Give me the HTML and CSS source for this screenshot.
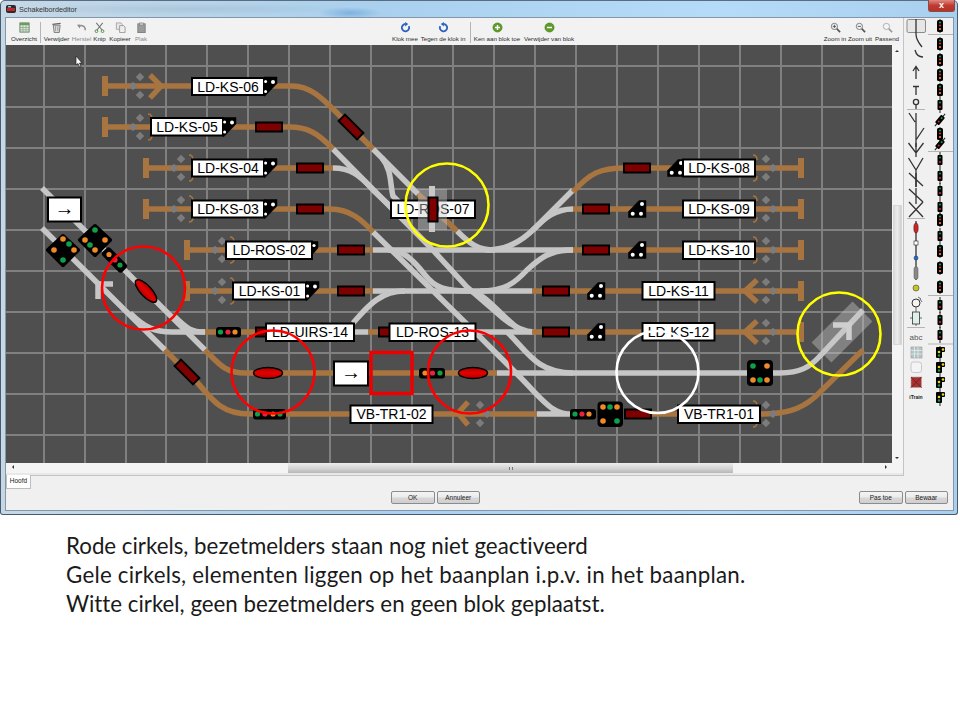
FILE: index.html
```html
<!DOCTYPE html>
<html lang="nl">
<head>
<meta charset="utf-8">
<title>Schakelbordeditor</title>
<link rel="stylesheet" href="styles.css">
</head>
<body>
<svg class="defs" width="0" height="0" aria-hidden="true">
  <defs>
    <linearGradient id="redfill" x1="0" y1="0" x2="0" y2="1"><stop offset="0" stop-color="#a80000"/><stop offset=".5" stop-color="#e60000"/><stop offset="1" stop-color="#b00000"/></linearGradient>
    <g id="dmL"><rect class="dm" x="4" y="-12" width="6" height="6" transform="rotate(45 7 -9)"/><rect class="dm" x="-3" y="-3" width="6" height="6" transform="rotate(45 0 0)"/><rect class="dm" x="4" y="6" width="6" height="6" transform="rotate(45 7 9)"/></g>
    <g id="dmR"><rect class="dm" x="-10" y="-12" width="6" height="6" transform="rotate(45 -7 -9)"/><rect class="dm" x="-3" y="-3" width="6" height="6" transform="rotate(45 0 0)"/><rect class="dm" x="-10" y="6" width="6" height="6" transform="rotate(45 -7 9)"/></g>
    <g id="par"><path class="paren" d="M-2 -13 Q2 -13 2 -8"/><path class="paren" d="M-2 13 Q2 13 2 8"/></g>
    <g id="bump"><rect class="bump" x="-3" y="-10" width="6" height="20"/></g>
    <g id="block"><rect class="blk" x="-13" y="-4.5" width="26" height="9"/></g>
    <g id="tl"><path class="sigb" d="M0 -9.5H13V-3L1 9.5H0Z"/><circle class="wd" cx="9" cy="-4.5" r="2"/><circle class="wd" cx="1.6" cy="-5" r="1.5"/><circle class="wd" cx="1.6" cy="5" r="1.5"/></g>
    <g id="tr"><path class="sigb" d="M-9.5 8.5H8V-8.5H1L-9.5 2.5Z"/><circle class="wd" cx="-5.3" cy="4.7" r="2"/><circle class="wd" cx="3" cy="4.7" r="2"/><circle class="wd" cx="4" cy="-5" r="2"/></g>
    <g id="ov"><ellipse class="ovl" cx="0" cy="0" rx="14.5" ry="5.5"/></g>
    <g id="ps1"><path class="pline" d="M0 -7V7"/><rect class="pbk" x="-3" y="-6" width="6" height="12" rx="1.5"/><circle class="lg" cy="-3.5" r="1.1"/><circle class="lr" cy="-.5" r="1.1"/><circle class="lo" cy="3" r="1.1"/></g>
    <g id="ps2"><path class="pline" d="M0 -8V8"/><rect class="pbk" x="-2.5" y="-5" width="5" height="10" rx="1"/><circle class="lg" cy="-2.5" r="1"/><circle class="lr" cy="2" r="1"/></g>
    <g id="ps3"><path class="pline" d="M0 -7V8"/><rect class="pbk" x="-4" y="-6" width="6" height="11" rx="1"/><rect class="pbk" x="1" y="-6" width="4" height="5" rx="1"/><circle class="ly" cx="3" cy="-3.500" r="1.300"/><circle class="ly" cy="-1" cx="-1" r="1.300"/><circle class="lg" cy="2.500" cx="-1" r="1.200"/></g>
  </defs>
</svg>

<div class="window">
  <div class="titlebar">
    <svg class="appicon" viewBox="0 0 10 10"><rect x="0" y="1" width="10" height="8" rx="2" fill="#2b2b2b"/><rect x="1" y="4" width="8" height="3" fill="#c2242a"/><rect x="2" y="2" width="3" height="1.5" fill="#9fc5e0"/></svg>
    <span class="title">Schakelbordeditor</span>
    <span class="close">x</span>
  </div>
  <div class="client">
    <div class="upper">
      <div class="pane">
        <div class="toolbar">
          <div class="group group-left">
            <div class="tool t-over"><svg viewBox="0 0 12 12"><rect x="1" y="1" width="10" height="10" fill="#dfe9dc" stroke="#5d7f5b"/><rect x="1" y="1" width="10" height="2.5" fill="#6d9a63"/><path d="M4.3 3.5V11M7.6 3.5V11M1 6H11M1 8.5H11" stroke="#7f9d7c" stroke-width=".7"/></svg><span>Overzicht</span></div>
            <i class="sep"></i>
            <div class="tool t-verw"><svg viewBox="0 0 12 12"><path d="M2.5 3.5L3.5 11.5H9L10 3.5Z" fill="#dcdcdc" stroke="#777"/><path d="M1.5 2.5L10.5 1.5" stroke="#666" stroke-width="1.4"/><path d="M5 4.5V10M7.5 4.5V10" stroke="#888" stroke-width=".8"/></svg><span>Verwijder</span></div>
            <div class="tool t-herst muted"><svg viewBox="0 0 12 12"><path d="M3 5.5C5 3 9 3.5 10 7V9" fill="none" stroke="#8d8d8d" stroke-width="1.6"/><path d="M1 3L4.8 2.6L4.3 7Z" fill="#8d8d8d"/></svg><span>Herstel</span></div>
            <div class="tool t-knip"><svg viewBox="0 0 12 12"><path d="M2.5 1L9 9M9.5 1L3 9" stroke="#707070" stroke-width="1.1"/><circle cx="2.7" cy="10" r="1.5" fill="none" stroke="#4f8a3f"/><circle cx="9.3" cy="10" r="1.5" fill="none" stroke="#4f8a3f"/></svg><span>Knip</span></div>
            <div class="tool t-kop"><svg viewBox="0 0 12 12"><path d="M1.5 1H6.5L8 2.5V8H1.5Z" fill="#e6e6e6" stroke="#a5a5a5"/><path d="M5 4H9.5L11 5.5V11.5H5Z" fill="#eee" stroke="#9a9a9a"/></svg><span>Kopieer</span></div>
            <div class="tool t-plak muted"><svg viewBox="0 0 12 12"><rect x="2" y="2" width="8" height="9.5" fill="#9b9b9b" stroke="#7e7e7e"/><rect x="4" y="1" width="4" height="2.5" fill="#c5c5c5" stroke="#7e7e7e" stroke-width=".6"/></svg><span>Plak</span></div>
          </div>
          <div class="group group-mid">
            <div class="tool t-klok"><svg viewBox="0 0 12 12"><path d="M9.6 4.5A4 4 0 1 1 6 2.2" fill="none" stroke="#2d62c0" stroke-width="2"/><path d="M5.6 0L9 2.3L5.6 4.8Z" fill="#2d62c0"/></svg><span>Klok mee</span></div>
            <div class="tool t-tegen"><svg viewBox="0 0 12 12"><path d="M2.4 4.5A4 4 0 1 0 6 2.2" fill="none" stroke="#2d62c0" stroke-width="2"/><path d="M6.4 0L3 2.3L6.4 4.8Z" fill="#2d62c0"/></svg><span>Tegen de klok in</span></div>
            <i class="sep"></i>
            <div class="tool t-ken"><svg viewBox="0 0 12 12"><circle cx="6" cy="6" r="5" fill="#5d9a26" stroke="#3f7a18" stroke-width=".6"/><path d="M3.2 6H8.8M6 3.2V8.8" stroke="#fff" stroke-width="1.6"/></svg><span>Ken aan blok toe</span></div>
            <div class="tool t-van"><svg viewBox="0 0 12 12"><circle cx="6" cy="6" r="5" fill="#5d9a26" stroke="#3f7a18" stroke-width=".6"/><path d="M3.2 6H8.8" stroke="#fff" stroke-width="1.6"/></svg><span>Verwijder van blok</span></div>
          </div>
          <div class="group group-right">
            <div class="tool t-zin"><svg viewBox="0 0 12 12"><path d="M7 7L11 11" stroke="#555" stroke-width="1.8"/><circle cx="4.8" cy="4.8" r="3.4" fill="#eef3f5" stroke="#777"/><path d="M3 4.8H6.6M4.8 3V6.6" stroke="#444" stroke-width=".9"/></svg><span>Zoom in</span></div>
            <div class="tool t-zuit"><svg viewBox="0 0 12 12"><path d="M7 7L11 11" stroke="#555" stroke-width="1.8"/><circle cx="4.8" cy="4.8" r="3.4" fill="#eef3f5" stroke="#777"/><path d="M3 4.8H6.6" stroke="#444" stroke-width=".9"/></svg><span>Zoom uit</span></div>
            <div class="tool t-pas"><svg viewBox="0 0 12 12"><path d="M7 7L11 11" stroke="#9a9a9a" stroke-width="1.8"/><circle cx="4.8" cy="4.8" r="3.4" fill="#f2f4f5" stroke="#aaa"/></svg><span>Passend</span></div>
          </div>
        </div>

        <div class="canvas-row">
          <svg class="board" viewBox="6 45 886 418" width="886" height="418">
            <rect x="6" y="45" width="886" height="418" class="bg"/>
            <path class="grid" d="M44 45V463M85 45V463M126 45V463M166 45V463M207 45V463M248 45V463M289 45V463M330 45V463M371 45V463M412 45V463M453 45V463M494 45V463M535 45V463M576 45V463M617 45V463M658 45V463M699 45V463M740 45V463M781 45V463M822 45V463M863 45V463M6 66H892M6 107H892M6 148H892M6 189H892M6 230H892M6 271H892M6 312H892M6 353H892M6 394H892M6 435H892"/>

            <!-- grey rails -->
            <g class="rail grey">
              <path d="M42 188L205 350"/>
              <path d="M42 228L165 350"/>
              <path d="M113 284H98V299"/>
              <path d="M130 313C145 328 155 332 172 332H205"/>
              <path d="M173 315C188 330 192 332 205 332"/>
              <path d="M373 149L418 194M457 231C470 244 478 250 495 250"/>
              <path d="M382 158C392 170 390 185 393 196L405 208"/>
              <path d="M333 149L430 247L467 287L497 313C510 325 522 332 534 332"/>
              <path d="M333 168C350 168 360 175 373 190L392 208"/>
              <path d="M373 232L483 340L520 377C535 392 545 405 555 410C560 413 565 414 572 414H537"/>
              <path d="M373 250H573"/>
              <path d="M373 291H532"/>
              <path d="M388 250C402 250 412 258 425 275C435 288 445 291 470 291C485 293 500 315 520 330"/>
              <path d="M573 190L535 228C520 243 505 250 485 250"/>
              <path d="M573 209C555 209 545 218 533 230"/>
              <path d="M573 250C550 250 540 258 527 270C515 283 505 291 480 291"/>
              <path d="M353 323C365 310 378 291 405 291"/>
              <path d="M355 332H368"/>
              <path d="M470 332H532"/>
              <path d="M507 332C525 348 535 373 573 373"/>
              <path d="M497 373H750"/>
              <path d="M770 373H780C800 373 810 367 820 356L863 310"/>
            </g>

            <!-- brown rails -->
            <g class="rail brown">
              <path d="M105 86H292C310 86 322 98 336 112L373 149"/>
              <path d="M105 127H290C305 127 316 131 333 149"/>
              <path d="M146 168H333"/>
              <path d="M146 209H330C350 209 362 220 373 232"/>
              <path d="M187 250H373"/>
              <path d="M187 291H373"/>
              <path d="M205 332H265"/>
              <path d="M368 332H390"/>
              <path d="M205 350C218 363 225 373 245 373H497"/>
              <path d="M165 350L197 382C212 400 222 414 250 414H537"/>
              <path d="M573 192C590 173 600 168 625 168H801"/>
              <path d="M573 209H801"/>
              <path d="M573 250H801"/>
              <path d="M532 291H801"/>
              <path d="M532 332H801"/>
              <path d="M650 414H760C785 414 800 410 815 397L863 350"/>
              <path d="M418 194L457 231"/>
              <path d="M150 75L161 86L150 98"/>
              <path d="M468 402L458 413L468 425"/>
              <path d="M757 280L745 291L757 302"/>
              <path d="M757 321L745 332L757 343"/>
            </g>

            <!-- bumpers, parens, diamonds -->
            <use href="#bump" x="105" y="86"/><use href="#bump" x="105" y="127"/>
            <use href="#bump" x="146" y="168"/><use href="#bump" x="146" y="209"/>
            <use href="#bump" x="187" y="250"/><use href="#bump" x="187" y="291"/>
            <use href="#bump" x="801" y="168"/><use href="#bump" x="801" y="209"/><use href="#bump" x="801" y="250"/><use href="#bump" x="801" y="291"/><use href="#bump" x="801" y="332"/>
            <use href="#dmL" x="133" y="86"/><use href="#dmL" x="133" y="127"/>
            <use href="#dmL" x="174" y="168"/><use href="#dmL" x="174" y="209"/>
            <use href="#dmL" x="215" y="250"/><use href="#dmL" x="215" y="291"/>
            <use href="#dmR" x="773" y="168"/><use href="#dmR" x="773" y="209"/><use href="#dmR" x="773" y="250"/><use href="#dmR" x="773" y="291"/><use href="#dmR" x="773" y="332"/><use href="#dmR" x="773" y="414"/>
            <use href="#dmR" x="487" y="414"/>
            <use href="#par" x="150" y="127"/><use href="#par" x="191" y="168"/><use href="#par" x="191" y="209"/><use href="#par" x="232" y="250"/><use href="#par" x="232" y="291"/>
            <use href="#par" x="755" y="168"/><use href="#par" x="755" y="209"/><use href="#par" x="755" y="250"/><use href="#par" x="755" y="414"/>

            <!-- blocks -->
            <use href="#block" x="269" y="127"/><use href="#block" x="310" y="168"/><use href="#block" x="310" y="209"/>
            <use href="#block" x="351" y="250"/><use href="#block" x="351" y="291"/>
            <use href="#block" x="269" y="332"/><use href="#block" x="392" y="332"/>
            <use href="#block" x="637" y="168"/><use href="#block" x="596" y="209"/><use href="#block" x="596" y="250"/>
            <use href="#block" x="556" y="291"/><use href="#block" x="556" y="332"/>
            <use href="#block" x="638" y="414"/>
            <use href="#block" transform="translate(351 127) rotate(45)"/>
            <use href="#block" transform="translate(187 372) rotate(45)"/>

            <!-- triangular signals -->
            <use href="#tr" x="677" y="168"/><use href="#tr" x="638" y="209"/><use href="#tr" x="638" y="250"/><use href="#tr" x="597" y="291"/><use href="#tr" x="597" y="332"/>

            <!-- labels -->
            <g class="labels">
              <g><rect x="192" y="78" width="72" height="17"/><text x="228" y="91.5">LD-KS-06</text></g>
              <g><rect x="151" y="118" width="72" height="17.5"/><text x="187" y="131.5">LD-KS-05</text></g>
              <g><rect x="192" y="159.5" width="72" height="17"/><text x="228" y="173">LD-KS-04</text></g>
              <g><rect x="192" y="200.5" width="72" height="17"/><text x="228" y="214">LD-KS-03</text></g>
              <g><rect x="226" y="241.5" width="86" height="17.5"/><text x="269" y="255">LD-ROS-02</text></g>
              <g><rect x="233" y="282.5" width="73" height="17"/><text x="269.5" y="296">LD-KS-01</text></g>
              <g><rect x="266" y="323.5" width="88" height="17.5"/><text x="310" y="337">LD-UIRS-14</text></g>
              <g><rect x="389.5" y="323.5" width="86" height="17.5"/><text x="432.5" y="337">LD-ROS-13</text></g>
              <g><rect x="391" y="200.500" width="84" height="17.5"/><text x="433" y="214">LD-ROS-07</text></g>
              <g><rect x="683" y="159.5" width="72" height="17"/><text x="719" y="173">LD-KS-08</text></g>
              <g><rect x="683" y="200.5" width="72" height="17"/><text x="719" y="214">LD-KS-09</text></g>
              <g><rect x="683" y="241.5" width="72" height="17.500"/><text x="719" y="255">LD-KS-10</text></g>
              <g><rect x="642.5" y="282" width="72" height="17.500"/><text x="678.5" y="295.500">LD-KS-11</text></g>
              <g><rect x="642.5" y="323" width="72" height="17.500"/><text x="678.5" y="336.500">LD-KS-12</text></g>
              <g><rect x="678" y="405.5" width="82" height="17.500"/><text x="719" y="419">VB-TR1-01</text></g>
              <g><rect x="350.5" y="405.5" width="82" height="17.500"/><text x="391.5" y="419">VB-TR1-02</text></g>
              <g class="arrowbox"><rect x="48" y="197.5" width="33" height="24"/><text x="64.5" y="215">→</text></g>
              <g class="arrowbox"><rect x="334" y="361.5" width="34" height="24"/><text x="351" y="379">→</text></g>
            </g>

            <!-- signals beside labels -->
            <use href="#tl" x="264" y="86.500"/><use href="#tl" x="223" y="127"/><use href="#tl" x="264" y="168"/><use href="#tl" x="264" y="209"/>
            <use href="#tl" x="306" y="291"/>
            <path class="sigb" d="M312 241.5H318V248L312 255Z"/><circle class="wd" cx="314" cy="245.5" r="1.6"/>

            <!-- pill and square signals -->
            <g>
              <rect class="pbk" x="216" y="327" width="25" height="10.5" rx="3"/><circle class="lg" cx="220.5" cy="332" r="2.6"/><circle class="lr" cx="228" cy="332" r="2.6"/><circle class="lo" cx="235" cy="332" r="2.6"/>
              <rect class="pbk" x="253" y="409" width="33" height="10.5" rx="3"/><circle class="lg" cx="257.5" cy="414" r="2.6"/><circle class="lr" cx="265" cy="414" r="2.6"/><circle class="lo" cx="273" cy="414" r="2.6"/><circle class="lg" cx="280" cy="414" r="2.6"/>
              <rect class="pbk" x="419" y="368" width="26" height="10.5" rx="3"/><circle class="lo" cx="425" cy="373" r="2.6"/><circle class="lr" cx="432.5" cy="373" r="2.6"/><circle class="lg" cx="440" cy="373" r="2.6"/>
              <rect class="pbk" x="570" y="409" width="26" height="10.5" rx="3"/><circle class="lg" cx="575" cy="414" r="2.6"/><circle class="lr" cx="582" cy="414" r="2.6"/><circle class="lo" cx="589" cy="414" r="2.6"/>
              <rect class="pbk" x="597.5" y="401.5" width="25.5" height="25.5" rx="4"/><circle class="lo" cx="603" cy="407" r="2.8"/><circle class="lg" cx="610" cy="407" r="2.8"/><circle class="lo" cx="617" cy="407" r="2.8"/><circle class="lo" cx="603" cy="421" r="2.8"/><circle class="lg" cx="617" cy="421" r="2.8"/>
              <rect class="pbk" x="747" y="360" width="26" height="26" rx="4"/><circle class="lg" cx="753" cy="366" r="2.8"/><circle class="lo" cx="767" cy="366" r="2.8"/><circle class="lo" cx="753" cy="380" r="2.8"/><circle class="lg" cx="760" cy="380" r="2.8"/><circle class="lo" cx="767" cy="380" r="2.8"/>
              <path class="pbk round" d="M63 236L78 250L63 265L48 250Z"/><circle class="lo" cx="54" cy="250" r="2.8"/><circle class="lo" cx="63" cy="239" r="2.8"/><circle class="lg" cx="69" cy="244" r="2.8"/><circle class="lo" cx="74" cy="250" r="2.8"/><circle class="lg" cx="63" cy="260" r="2.8"/>
              <path class="pbk round" d="M95 226L110 240L95 255L80 240Z"/><circle class="lg" cx="95" cy="230" r="2.8"/><circle class="lo" cx="85" cy="240" r="2.8"/><circle class="lg" cx="90" cy="245" r="2.8"/><circle class="lo" cx="105" cy="240" r="2.8"/><circle class="lo" cx="95" cy="250" r="2.8"/>
              <rect class="pbk" x="-14" y="-5.5" width="28" height="11" rx="3" transform="translate(114.5 260) rotate(45)"/><circle class="lo" cx="109" cy="254.5" r="2.6"/><circle class="lr" cx="115" cy="260" r="2.6"/><circle class="lg" cx="120" cy="265" r="2.6"/>
            </g>

            <!-- occupancy sensors -->
            <use href="#ov" transform="translate(146 291) rotate(47)"/>
            <use href="#ov" x="268" y="373"/>
            <use href="#ov" x="473" y="373"/>

            <!-- placed elements on top of the plan -->
            <rect class="ghost" x="418" y="189" width="29" height="41"/>
            <rect class="strip" x="429" y="186" width="6" height="46"/>
            <rect class="blk" x="428.5" y="197.5" width="9" height="24"/>
            <rect class="ghost" x="-14" y="-29" width="28" height="58" transform="translate(842 332) rotate(45)"/>
            <path class="rail lightgrey" d="M833 325H849V340"/>

            <rect class="redsq" x="371" y="352.5" width="41" height="41"/>

            <circle class="ring red" cx="143.5" cy="288" r="41.5"/>
            <circle class="ring red" cx="273" cy="372" r="41.5"/>
            <circle class="ring red" cx="469.5" cy="372" r="41.5"/>
            <circle class="ring yellow" cx="447" cy="205" r="41.5"/>
            <circle class="ring yellow" cx="839" cy="334" r="41.5"/>
            <circle class="ring white" cx="657.5" cy="372" r="41"/>

            <path class="cursor" d="M76 56V65L78 63.5L79.5 67L81 66.5L79.5 63H82Z"/>
          </svg>
          <div class="vscroll">
            <span class="arr up"></span>
            <div class="vthumb"></div>
            <span class="arr down"></span>
          </div>
        </div>
        <div class="hscroll">
          <span class="arr left"></span>
          <div class="hthumb"><b></b></div>
          <span class="arr right"></span>
        </div>
      </div>

      <svg class="palette" viewBox="905 18 48 458" width="48" height="458">
        <rect class="selbtn" x="907" y="19.5" width="18.5" height="13" rx="1.5"/>
        <g class="pt">
          <path d="M916 19V34C916 40 919 43 922 47"/>
          <path d="M915 50C916 54 919 57 923 57"/>
          <path d="M916 79V66M913 71L916 66.5L919 71"/>
          <path d="M916 95V86.5M913 86.5H919"/>
          <circle cx="916" cy="102" r="2.6"/><path d="M916 105V110"/>
          <path d="M909 113L915 122M916 113V127"/>
          <path d="M916 127V147M924 128L916 140"/>
          <path d="M908.5 143L916 153L923.5 143M916 143V157"/>
          <path d="M908.5 158L916 170L923 158M916 170V187"/>
          <path d="M909 173L923 186M916 173V187"/>
          <path d="M909 189L923 202M916 188V204"/>
          <path d="M909 202L923 217M923 202L909 217"/>
        </g>
        <path class="pdiv" d="M907 109.5H925M907 218.5H925M907 327.5H925M928 34.500H953M928 151.500H953M928 295.500H953M928 344H953"/>
        <path class="pt" d="M916 221V280"/>
        <ellipse cx="916" cy="228" rx="2.2" ry="5" class="pred"/>
        <rect x="914" y="241" width="4" height="4" class="pwhite"/>
        <circle cx="916" cy="258" r="2" class="pblue"/>
        <rect x="914" y="267" width="4" height="12" rx="1.5" class="pgray"/>
        <circle cx="916" cy="288" r="3" class="pyellow"/>
        <circle cx="916" cy="303" r="4" class="pwhitec"/><path class="pthin" d="M916 307V310M918 297L921 299M920 299L922 302"/>
        <rect x="912.500" y="312" width="7" height="12" class="pmint"/><path class="pthin" d="M910 318H912.500M919.500 318H922M916 310V312M916 324V326"/>
        <text class="abc" x="916" y="340">abc</text>
        <g class="pgrid"><rect x="911" y="347" width="11" height="11"/><path d="M914.500 347V358M918 347V358M911 350.500H922M911 354H922"/></g>
        <rect class="pdash" x="911" y="362" width="10.500" height="10.500" rx="2.500"/>
        <g><rect class="predbox" x="911" y="377" width="10.500" height="10.500"/><path class="predx" d="M911 377L921.500 387.500M921.500 377L911 387.500"/></g>
        <text class="itrain" x="916" y="399">iTrain</text>

        <use href="#ps1" x="940" y="26"/>
        <use href="#ps1" x="940" y="44"/><use href="#ps1" x="940" y="60"/><use href="#ps1" x="940" y="75"/><use href="#ps1" x="940" y="90"/><use href="#ps2" x="940" y="105"/>
        <use href="#ps2" transform="translate(940 120) rotate(40)"/><use href="#ps1" x="940" y="134"/><use href="#ps2" transform="translate(940 144) rotate(40)"/>
        <use href="#ps2" x="940" y="160"/><use href="#ps2" x="940" y="176"/><use href="#ps2" x="940" y="191"/><use href="#ps2" x="940" y="207"/><use href="#ps1" x="940" y="220"/>
        <use href="#ps2" x="940" y="236"/><use href="#ps1" x="940" y="251"/><use href="#ps1" x="940" y="268"/><use href="#ps1" x="940" y="287"/>
        <use href="#ps2" x="940" y="305"/><use href="#ps2" x="940" y="320"/><use href="#ps2" x="940" y="335"/>
        <use href="#ps3" x="940" y="353"/><use href="#ps3" x="940" y="368"/><use href="#ps3" x="940" y="383"/><use href="#ps3" x="940" y="398"/>
      </svg>
    </div>

    <div class="tabrow"><span class="tab">Hoofd</span></div>
    <div class="buttons">
      <button class="btn">OK</button><button class="btn">Annuleer</button>
      <span class="spacer"></span>
      <button class="btn">Pas toe</button><button class="btn">Bewaar</button>
    </div>
  </div>
</div>

<div class="notes">
  <p>Rode cirkels, bezetmelders staan nog niet geactiveerd</p>
  <p class="wide">Gele cirkels, elementen liggen op het baanplan i.p.v. in het baanplan.</p>
  <p>Witte cirkel, geen bezetmelders en geen blok geplaatst.</p>
</div>
</body>
</html>
```

FILE: styles.css
```css
* { box-sizing: border-box; }
html, body { margin: 0; padding: 0; background: #fff; }
body { width: 960px; height: 720px; overflow: hidden; font-family: "Liberation Sans", sans-serif; }
.defs { position: absolute; }

.window {
  width: 958px; height: 515px;
  background: linear-gradient(90deg, #c5d8e6 0, #a9d0ee 40%, #b4dcf8 75%, #a8cfee 100%);
  border: 1px solid #4a5a6c; border-top-color: #5c6c80; border-radius: 5px 5px 3px 3px;
  display: flex; flex-direction: column;
  padding: 0 3px 3px 4px;
}
.titlebar {
  height: 16px; display: flex; align-items: center; position: relative; flex: none;
  background: radial-gradient(ellipse 32px 6px at 345px 12px, rgba(90,150,210,.55), transparent),
              radial-gradient(ellipse 180px 6px at 180px 8px, rgba(120,135,150,.18), transparent);
}
.appicon { width: 10px; height: 10px; margin-left: 1px; }
.title { font-size: 7.2px; color: #333; margin-left: 3px; }
.close {
  position: absolute; right: -1px; top: -1px; width: 27px; height: 12px;
  background: linear-gradient(#e08a80, #c03a30 50%, #b83228);
  color: #fff; font-size: 9px; font-weight: bold; text-align: center; line-height: 10px;
  border: 1px solid #8a4a48; border-top: 0; border-radius: 0 0 3px 3px;
}
.client {
  flex: 1; background: #f0f0f0; border: 1px solid #8496a8; display: flex; flex-direction: column;
}
.upper { display: flex; height: 458px; flex: none; }
.pane { width: 898px; display: flex; flex-direction: column; border-bottom: 1px solid #c4c4c4; border-right: 1px solid #c4c4c4; flex: none; }

.toolbar { height: 27px; flex: none; display: flex; background: #f2f2f2; padding-top: 4px; }
.group { display: flex; align-items: flex-start; }
.group-left { margin-left: 5px; }
.group-mid { margin-left: 244px; }
.group-right { margin-left: auto; margin-right: 5px; }
.tool { display: flex; flex-direction: column; align-items: center; font-size: 6.2px; color: #2c2c2c; white-space: nowrap; }
.tool svg { width: 11px; height: 11px; margin-bottom: 2px; }
.tool.muted { color: #8a8a8a; }
.sep { width: 1px; height: 21px; background: #b5b5b5; margin-top: 0; flex: none; }
.t-over { width: 26px; margin-right: 3px; }
.t-verw { width: 27px; margin-left: 2px; }
.t-herst { width: 21px; margin-left: 1px; }
.t-knip { width: 15px; }
.t-kop { width: 24px; margin-left: 1px; }
.t-plak { width: 14px; margin-left: 2px; }
.t-klok { width: 26px; }
.t-tegen { width: 46px; margin-left: 2px; }
.group-mid .sep { margin: 0 3px 0 4px; }
.t-ken { width: 46px; }
.t-van { width: 52px; margin-left: 3px; }
.t-zin { width: 22px; }
.t-zuit { width: 22px; margin-left: 3px; }
.t-pas { width: 22px; margin-left: 5px; }

.canvas-row { display: flex; height: 418px; flex: none; }
.board { display: block; flex: none; }
.bg { fill: #4f4f4f; }
.grid { stroke: #808080; stroke-width: 2; fill: none; }
.rail { fill: none; stroke-width: 5.5; }
.rail.grey, .rail.grey path { stroke: #c6c6c6; }
.rail.brown, .rail.brown path { stroke: #a8743f; }
.rail.lightgrey { stroke: #cfcfcf; }
.dm { fill: #7c7c7c; }
.paren { fill: none; stroke: #a8743f; stroke-width: 1.5; }
.bump { fill: #a8743f; }
.blk { fill: #7e0000; stroke: #000; stroke-width: 2; }
.sigb { fill: #000; stroke: #000; stroke-width: .5; }
.wd { fill: #fff; }
.ovl { fill: url(#redfill); stroke: #000; stroke-width: 1.5; }
.labels rect { fill: #fff; stroke: #000; stroke-width: 2; }
.labels text { font-family: "Liberation Sans", sans-serif; font-size: 14px; fill: #000; text-anchor: middle; }
.arrowbox text { font-size: 20px; }
.pbk { fill: #000; }
.pbk.round { stroke: #000; stroke-width: 4; stroke-linejoin: round; }
.lg { fill: #0ea04a; }
.lr { fill: #e5243f; }
.lo { fill: #f08a28; }
.ly { fill: #e8d820; }
.ghost { fill: rgba(200,200,200,.42); }
.strip { fill: #c8c8c8; }
.redsq { fill: none; stroke: #ee0000; stroke-width: 3.5; }
.ring { fill: none; stroke-width: 2.6; }
.ring.red { stroke: #f00; }
.ring.yellow { stroke: #ff0; }
.ring.white { stroke: #fff; }
.cursor { fill: #fff; stroke: #222; stroke-width: .7; }

.vscroll { width: 11px; flex: none; background: #f4f4f4; display: flex; flex-direction: column; position: relative; }
.vthumb { position: absolute; left: 1px; right: 1px; top: 160px; height: 140px; background: linear-gradient(90deg, #dcdcdc, #ececec 50%, #cfcfcf); border: 1px solid #d8d8d8; }
.arr { position: absolute; width: 0; height: 0; border: 2px solid transparent; }
.arr.up { left: 3px; top: 3px; border-bottom-color: #333; }
.arr.down { left: 3px; bottom: 2px; border-top-color: #333; }
.hscroll { height: 12px; flex: none; background: #f4f4f4; position: relative; border-bottom: 2px solid #e8e8e8; }
.hthumb { position: absolute; left: 282px; width: 445px; top: 0; bottom: 0; background: linear-gradient(#ececec, #d6d6d6 50%, #b8b8b8); display: flex; justify-content: center; align-items: center; }
.hthumb b { width: 4px; height: 3px; border-left: 1px solid #777; border-right: 1px solid #777; }
.arr.left { left: 4px; top: 2px; border-right-color: #333; }
.arr.right { right: 14px; top: 2px; border-left-color: #333; }

.palette { display: block; flex: none; margin-left: 1px; }
.selbtn { fill: #e6e6e6; stroke: #8a8a8a; }
.pt, .pt path, .pt circle { fill: none; stroke: #333; stroke-width: 1.3; }
.pdiv { stroke: #b4b4b4; stroke-width: 1; fill: none; }
.pred { fill: #d02020; stroke: #222; stroke-width: .5; }
.pwhite { fill: #fff; stroke: #222; stroke-width: .6; }
.pblue { fill: #1a6cd8; stroke: #222; stroke-width: .5; }
.pgray { fill: #888; stroke: #555; stroke-width: .5; }
.pyellow { fill: #c8c41e; stroke: #555; stroke-width: .7; }
.pwhitec { fill: #f4f4f4; stroke: #333; stroke-width: 1; }
.pthin { stroke: #444; stroke-width: .8; fill: none; }
.pmint { fill: #def0ea; stroke: #333; stroke-width: .8; }
.abc { font-size: 8px; fill: #555; text-anchor: middle; font-family: "Liberation Sans", sans-serif; }
.pgrid rect { fill: #b4c4c4; stroke: #999; stroke-width: .6; }
.pgrid path { stroke: #e4ecec; stroke-width: .8; }
.pdash { fill: #f4f4f4; stroke: #c8c8c8; stroke-width: 1; }
.predbox { fill: #a83030; stroke: #aaa; stroke-width: .6; }
.predx { stroke: #7a2020; stroke-width: 1; }
.itrain { font-size: 5px; font-weight: bold; fill: #222; text-anchor: middle; font-family: "Liberation Sans", sans-serif; }
.pline { stroke: #222; stroke-width: 1; }

.tabrow { height: 14px; flex: none; display: flex; }
.tab { width: 25px; height: 14px; margin-top: -1px; background: #fff; border: 1px solid #bdbdbd; border-top: 0; font-size: 6.5px; color: #222; text-align: center; line-height: 12px; }
.buttons { display: flex; padding: 1px 5px 0 385px; gap: 2px; height: 15px; }
.spacer { flex: 1; }
.btn {
  width: 43.500px; height: 13px; padding: 0; font-family: "Liberation Sans", sans-serif; font-size: 6.500px; color: #222;
  background: linear-gradient(#f4f4f4, #ebebeb 48%, #d8d8d8 52%, #cfcfcf); border: 1px solid #8c8c8c; border-radius: 2px;
}

.notes { padding: 16px 0 0 66px; font-family: Lato, sans-serif; font-size: 22.3px; line-height: 29px; color: #1a1a1a; font-variant-ligatures: none; }
.notes p { margin: 0; white-space: nowrap; }
.notes .wide { letter-spacing: .24px; }
```
